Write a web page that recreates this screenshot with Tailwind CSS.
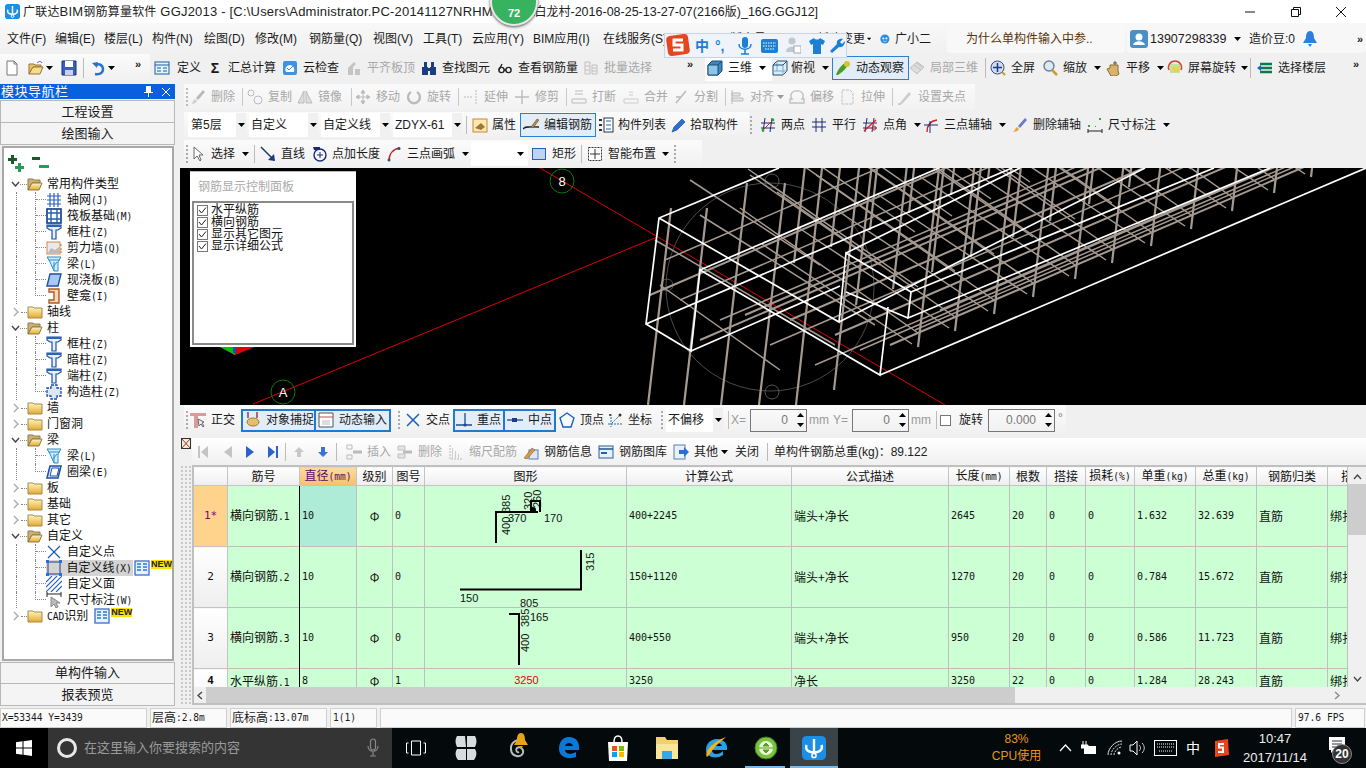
<!DOCTYPE html>
<html lang="zh">
<head>
<meta charset="utf-8">
<script src="https://cdn.jsdelivr.net/npm/@tailwindcss/browser@4"></script>
</head>
<body class="m-0 overflow-hidden">
<svg class="absolute w-0 h-0">
<defs>
<linearGradient id="gold" x1="0" y1="0" x2="0" y2="1"><stop offset="0" stop-color="#fff6c4"/><stop offset="1" stop-color="#e3a92d"/></linearGradient>
</defs>
<symbol id="c" viewBox="0 0 7 4"><path d="M0 0h7L3.5 4z"/></symbol>
<symbol id="logo" viewBox="0 0 16 16"><rect width="16" height="16" rx="3" fill="#1b8fe6"/><path d="M8 2v10M3 6c-1 3 1 5 5 5s6-2 5-5" stroke="#fff" stroke-width="1.6" fill="none"/><circle cx="8" cy="13" r="1.4" fill="none" stroke="#fff"/></symbol>
<symbol id="new" viewBox="0 0 16 16"><path d="M3 1h7l3 3v11H3z" fill="#fff" stroke="#777"/><path d="M10 1v3h3" fill="none" stroke="#777"/></symbol>
<symbol id="open" viewBox="0 0 16 16"><path d="M1 4h5l1 1h6v2H5l-4 7z" fill="#e8c56a" stroke="#93753a"/><path d="M5 7h10l-3 7H1z" fill="#f6dd8e" stroke="#93753a"/><path d="M9 3c2-2 4-2 5 0" stroke="#2a62c9" fill="none"/></symbol>
<symbol id="save" viewBox="0 0 16 16"><path d="M1 1h14v14H1z" fill="#3b5fc0" stroke="#1d2f7a"/><path d="M4 1h8v6H4z" fill="#fff"/><path d="M4 10h8v5H4z" fill="#c8d2ee"/></symbol>
<symbol id="undo" viewBox="0 0 16 16"><path d="M5 14c6 1 8-2 8-5S10 3 6 5" stroke="#2a6fd6" stroke-width="2.5" fill="none"/><path d="M2 3l6-1-1 6z" fill="#2a6fd6"/></symbol>
<symbol id="def" viewBox="0 0 16 16"><rect x="1" y="2" width="14" height="12" fill="#e4f3ff" stroke="#1b5f9e"/><path d="M1 5h14M3 8h4M3 11h4M9 8h4M9 11h4" stroke="#1b5f9e"/></symbol>
<symbol id="cloud" viewBox="0 0 16 16"><rect x="1" y="1" width="14" height="14" rx="2" fill="#3c93df"/><path d="M4 12c-2-4 1-7 4-7s5 3 4 7z" fill="#fff"/><path d="M5 8l2 2 4-4" stroke="#3c93df" fill="none"/></symbol>
<symbol id="flat" viewBox="0 0 16 16"><path d="M2 15V8l6-6 2 2-3 3v8zM9 9h5v6H9z" fill="#c4c4c4"/></symbol>
<symbol id="bino" viewBox="0 0 16 16"><path d="M1 7h6v8H1zM9 7h6v8H9zM3 2h3v5H3zM10 2h3v5h-3zM7 8h2v3H7z" fill="#1b3f7a"/></symbol>
<symbol id="glass" viewBox="0 0 16 16"><g stroke="#222" fill="none" stroke-width="1.4"><circle cx="4.5" cy="10" r="2.6"/><circle cx="11.5" cy="10" r="2.6"/><path d="M7 10h2M2 10l3-6"/></g></symbol>
<symbol id="batch" viewBox="0 0 16 16"><path d="M2 2h5v12H2zM9 5h5v9H9zM2 6h5M2 10h5M9 8h5M9 11h5" stroke="#c0c0c0" fill="#eee"/></symbol>
<symbol id="cube" viewBox="0 0 16 16"><path d="M1 5l4-4h10v10l-4 4H1z" fill="#3f86bd" stroke="#1d4f79"/><path d="M1 5h10v10H1z" fill="#8cc4ea" stroke="#1d4f79"/><path d="M11 5l4-4" stroke="#1d4f79"/></symbol>
<symbol id="wcube" viewBox="0 0 16 16"><path d="M1 5l4-4h10v10l-4 4H1z" fill="#dceefa" stroke="#1d4f79"/><path d="M5 1v10H1M5 11h10M11 5v10" fill="none" stroke="#7aa7c9"/><path d="M1 5h10l4-4" fill="none" stroke="#1d4f79"/></symbol>
<symbol id="orbit" viewBox="0 0 16 16"><path d="M1 15C3 9 7 4 12 2l2 2c-3 4-6 8-11 11z" fill="#4f9a26"/><circle cx="12" cy="4" r="3" fill="#d6c52a"/></symbol>
<symbol id="gcube" viewBox="0 0 16 16"><path d="M1 8l7-6 7 5-7 7z" fill="#ddd" stroke="#c0c0c0"/><path d="M5 5l7 5M8 3l5 4" stroke="#c0c0c0"/></symbol>
<symbol id="full" viewBox="0 0 16 16"><circle cx="7.5" cy="7.5" r="6.5" fill="#cfdcf3" stroke="#3a4f7a"/><path d="M7.5 3v9M3 7.5h9" stroke="#1c3a8a" stroke-width="1.5"/><path d="M12 12l3 3" stroke="#c5a02a" stroke-width="2"/></symbol>
<symbol id="zoom" viewBox="0 0 16 16"><circle cx="7" cy="6" r="5" fill="#dde8f7" stroke="#6a7f9a" stroke-width="1.4"/><path d="M10 10l5 5" stroke="#c5a02a" stroke-width="2.5"/></symbol>
<symbol id="hand" viewBox="0 0 16 16"><path d="M2 9l3-1V5h8v6l1 3-3 2H6z" fill="#d9b36c" stroke="#8a6a2a"/><path d="M10 1v4M8 3h4" stroke="#556"/></symbol>
<symbol id="rot" viewBox="0 0 16 16"><rect x="3" y="4" width="10" height="9" fill="#bfe39a"/><path d="M6 7h6v5H6z" fill="#f0d04a"/><path d="M2 10A6.5 6.5 0 1 1 14 10" stroke="#d0463a" stroke-width="1.6" fill="none"/></symbol>
<symbol id="layers" viewBox="0 0 16 16"><path d="M3 4h12M3 8h12M3 12h12" stroke="#0a7a50" stroke-width="2.4"/><path d="M0 8l4-3v6z" fill="#1f5fc9"/></symbol>
<symbol id="attr" viewBox="0 0 16 16"><rect x="1" y="2" width="14" height="13" fill="#fbe9b0" stroke="#d9822b"/><path d="M3 11l6-5 4 4-4 3z" fill="#9a7a3a"/></symbol>
<symbol id="edit" viewBox="0 0 16 16"><path d="M0 12c3-3 6-2 16-2" stroke="#222" fill="none" stroke-width="1.4"/><path d="M8 10l6-8 2 1-6 8z" fill="#c08a2a" stroke="#444" stroke-width=".5"/></symbol>
<symbol id="list" viewBox="0 0 16 16"><rect x="6" y="1" width="9" height="14" fill="#fff" stroke="#333"/><path d="M8 4h5M8 8h5M8 12h5" stroke="#1f5fc9"/><path d="M1 2h3v2H1zM1 7h3v2H1zM1 12h3v2H1z" fill="#333"/></symbol>
<symbol id="pick" viewBox="0 0 16 16"><path d="M1 15l2-5 8-8 3 3-8 8z" fill="#2a6fd6" stroke="#123f8a" stroke-width=".6"/></symbol>
<symbol id="two" viewBox="0 0 16 16"><path d="M5 1L3 15M12 1l-2 14M1 6h14M1 11h14" stroke="#1a2a7a" fill="none"/><path d="M2 14L14 2" stroke="#c22"/><circle cx="3" cy="13" r="1.4" fill="#2a2"/><circle cx="13" cy="3" r="1.4" fill="#2a2"/></symbol>
<symbol id="par" viewBox="0 0 16 16"><path d="M5 1v14M11 1v14M1 5h14M1 10h14" stroke="#1a2a7a" fill="none"/></symbol>
<symbol id="ang" viewBox="0 0 16 16"><path d="M5 1L3 15M12 1l-2 14M1 6h14M1 11h14" stroke="#1a2a7a" fill="none"/><path d="M2 14L14 3" stroke="#d22" stroke-width="1.4"/><circle cx="12" cy="11" r="2" fill="none" stroke="#d22"/></symbol>
<symbol id="arc" viewBox="0 0 16 16"><path d="M4 15c0-7 3-11 10-12" stroke="#c22" fill="none" stroke-width="1.4"/><path d="M1 8h14M7 4v12" stroke="#1a2a7a" fill="none"/></symbol>
<symbol id="brush" viewBox="0 0 16 16"><path d="M1 15c2-1 2-4 4-5l2 2c-1 2-3 3-6 3z" fill="#e9a33a"/><path d="M6 9l7-8 2 2-7 8z" fill="#6a7bc9"/></symbol>
<symbol id="dim" viewBox="0 0 16 16"><path d="M1 12v4M15 12v4M1 14h14" stroke="#222" fill="none"/><path d="M1 8h2v2H1zM12 1h2v2h-2zM8 9h1v1H8z" fill="#3a3"/></symbol>
<symbol id="arrow" viewBox="0 0 16 16"><path d="M4 1l0 12 3-3 3 5 1-1-2-5h4z" fill="#fff" stroke="#666"/></symbol>
<symbol id="ln" viewBox="0 0 16 16"><path d="M1 1l13 13" stroke="#1a3a7a" stroke-width="1.5"/><path d="M15 15l-7-1 6-6z" fill="#1a3a7a"/></symbol>
<symbol id="plen" viewBox="0 0 16 16"><circle cx="9" cy="9" r="6" fill="none" stroke="#1a2a7a" stroke-width="1.4"/><path d="M9 6v6M6 9h6" stroke="#1a2a7a"/><path d="M2 1h7v3H3z" fill="#1a2a7a"/></symbol>
<symbol id="arc3" viewBox="0 0 16 16"><path d="M3 15C3 8 7 3 14 2" stroke="#b22" fill="none" stroke-width="1.5"/><circle cx="3" cy="14" r="1.5" fill="#356"/><circle cx="13" cy="2.5" r="1.5" fill="#356"/></symbol>
<symbol id="rct" viewBox="0 0 16 16"><rect x="1.5" y="2.5" width="13" height="11" fill="#bcd3f2" stroke="#2a5fc0"/></symbol>
<symbol id="smart" viewBox="0 0 16 16"><rect x="1.5" y="1.5" width="13" height="13" fill="#fff" stroke="#333" stroke-dasharray="2 1"/><path d="M8 3v10M3 8h10" stroke="#333"/></symbol>
<symbol id="ortho" viewBox="0 0 16 16"><path d="M0 1h16v3H8v12H4V4H0z" fill="#d99a9a"/><path d="M8 7l1 7 2-2 2 3 1-1-2-3 2-1z" fill="#eee" stroke="#667"/></symbol>
<symbol id="snap" viewBox="0 0 16 16"><path d="M3 0v6M12 0v6" stroke="#7a2a2a" stroke-width="1.3"/><ellipse cx="8" cy="10" rx="6" ry="4" fill="#e5c06c" stroke="#9a7a2a"/></symbol>
<symbol id="dyn" viewBox="0 0 16 16"><path d="M1 1h14v14H1z" fill="#fff" stroke="#555"/><path d="M1 5h14" stroke="#b55"/><path d="M4 8h8v5H4z" fill="#ddd"/></symbol>
<symbol id="xp" viewBox="0 0 16 16"><path d="M2 2l12 12M14 2L2 14" stroke="#1a5fc0" stroke-width="1.5"/></symbol>
<symbol id="perp" viewBox="0 0 16 16"><path d="M0 13h16M9 1v12" stroke="#1a4a9a" stroke-width="1.3"/><circle cx="9" cy="13" r="1.6" fill="#1a4a9a"/></symbol>
<symbol id="mid" viewBox="0 0 16 16"><path d="M0 8h16" stroke="#1a4a9a" stroke-width="1.3"/><rect x="5" y="6" width="5" height="4" fill="#1a3a8a"/></symbol>
<symbol id="vtx" viewBox="0 0 16 16"><path d="M8 1l7 5-3 9H4L1 6z" fill="#f6fbff" stroke="#1a5fc0" stroke-width="1.4"/></symbol>
<symbol id="crd" viewBox="0 0 16 16"><path d="M4 2v13M1 12h14M5 11l8-8" stroke="#1a6fc0" stroke-dasharray="2 1" fill="none"/><circle cx="13" cy="3" r="1.5" fill="#333"/><circle cx="3" cy="3" r="1" fill="#333"/></symbol>
<symbol id="ins" viewBox="0 0 16 16"><path d="M1 1h5v4H1zM1 11h5v4H1z" fill="none" stroke="#bbb"/><path d="M7 8h9" stroke="#bbb" stroke-width="3"/></symbol>
<symbol id="del" viewBox="0 0 16 16"><path d="M1 2h7v4H1zM1 10h7v4H1z" fill="#e4e4e4" stroke="#c0c0c0"/><path d="M6 8h9" stroke="#bbb" stroke-width="3"/></symbol>
<symbol id="sc" viewBox="0 0 16 16"><path d="M2 1v14h13" stroke="#bbb" stroke-dasharray="2 1" fill="none"/><path d="M4 4h1v10H4zM7 7h1v7H7zM10 10h1v4h-1z" fill="#ccc"/></symbol>
<symbol id="inf" viewBox="0 0 16 16"><rect x="6" y="6" width="9" height="9" fill="#dbe6f6" stroke="#5a7fb0"/><path d="M1 14l8-10 3 2-8 9z" fill="#d99a3a" stroke="#555" stroke-width=".5"/></symbol>
<symbol id="lib" viewBox="0 0 16 16"><rect x="1" y="2" width="14" height="12" fill="#e7f0fb" stroke="#2a5f9a"/><path d="M1 5h14" stroke="#2a5f9a" stroke-width="1.6"/><path d="M3 8h6v2H3z" fill="#2a5f9a"/></symbol>
<symbol id="oth" viewBox="0 0 16 16"><rect x="1" y="1" width="11" height="14" fill="#e7f0fb" stroke="#5a7fb0"/><path d="M6 6h5V3l5 5-5 5v-3H6z" fill="#2a6fd6"/></symbol>
<symbol id="fo" viewBox="0 0 16 16"><path d="M1 3h5l1 1h6v3H5l-4 7z" fill="#cdb26a" stroke="#8b7a50"/><path d="M5 7h10l-3 7H1z" fill="url(#gold)" stroke="#8b7a50"/></symbol>
<symbol id="fc" viewBox="0 0 16 16"><path d="M1 3h5l1 1h8v10H1z" fill="url(#gold)" stroke="#a08a50"/></symbol>
<symbol id="tcol" viewBox="0 0 16 16"><path d="M1 1h14v3l-3 2H10v9H6V6H4L1 4z" fill="#e8f0fb" stroke="#1f4fa8" stroke-width="1.2"/><path d="M1 1h14v2H1z" fill="#2a62c0"/></symbol>
<symbol id="wg" viewBox="0 0 16 16"><path d="M4 1v14M8 1v14M12 1v14M1 4h14M1 8h14M1 12h14" stroke="#2a62c0" stroke-width="1.2"/></symbol>
<symbol id="raft" viewBox="0 0 16 16"><rect x="1" y="1" width="14" height="14" fill="#fff" stroke="#123a7a" stroke-width="1.6"/><path d="M5 1v14M11 1v14M1 5h14M1 11h14" stroke="#1f5fb0" stroke-width="1.4"/></symbol>
<symbol id="wall" viewBox="0 0 16 16"><rect x="1" y="2" width="13" height="12" fill="#e9e9e9" stroke="#d08a50"/><path d="M2 13l3-5 4 2 4-3v6z" fill="#bbb"/><path d="M14 5h2M14 9h2M14 12h2" stroke="#d2691e"/></symbol>
<symbol id="beam" viewBox="0 0 16 16"><path d="M1 1h14l-3 5v9H8L4 6z" fill="#d5ecfa" stroke="#2a8ad0"/><path d="M3 4h11M8 6v9M11 6l-4 5" stroke="#2a8ad0"/></symbol>
<symbol id="slab" viewBox="0 0 16 16"><path d="M4 2h11l-3 12H1z" fill="#a9c9f2" stroke="#1f4fa8" stroke-width="1.4"/></symbol>
<symbol id="nic" viewBox="0 0 16 16"><path d="M3 1h10v14H3v-3h5V4H3z" fill="#f6d9b8" stroke="#b05a20" stroke-width="1.4"/></symbol>
<symbol id="gz" viewBox="0 0 16 16"><path d="M5 1h6v3h4v8h-4v3H5v-3H1V4h4z" fill="#dbe6f6" stroke="#1f4fa8" stroke-width="1.3" stroke-dasharray="3 1"/></symbol>
<symbol id="ring" viewBox="0 0 16 16"><path d="M4 2h11l-3 12H1z" fill="#e6f0fb" stroke="#1f4fa8" stroke-width="1.6"/><path d="M6 4h7l-2 8H4z" fill="#fff" stroke="#1f4fa8"/></symbol>
<symbol id="xpt" viewBox="0 0 16 16"><path d="M2 2l12 12M14 2L2 14" stroke="#1f5fb0" stroke-width="1.3"/></symbol>
<symbol id="sq" viewBox="0 0 16 16"><rect x="2" y="2" width="12" height="12" fill="none" stroke="#1f3f80"/><path d="M0 0h3v3H0zM13 0h3v3h-3zM0 13h3v3H0zM13 13h3v3h-3z" fill="#2a6fd6"/></symbol>
<symbol id="hat" viewBox="0 0 16 16"><path d="M0 6l6-6M0 11L11 0M0 16L16 0M5 16L16 5M10 16l6-6" stroke="#2a62c0" stroke-width="1.1"/></symbol>
<symbol id="dcur" viewBox="0 0 16 16"><path d="M1 0v5M15 0v5M1 2h14" stroke="#222"/><path d="M5 5l0 10 3-3 2 4 2-1-2-4h4z" fill="#bbb" stroke="#888"/></symbol>
<symbol id="book" viewBox="0 0 16 16"><rect x="1" y="1" width="14" height="14" fill="#e6f2ff" stroke="#2a62c0" stroke-width="1.2"/><path d="M3 4h4M3 7h4M3 10h4M9 4h4M9 7h4M9 10h4" stroke="#2a7ad6" stroke-width="1.4"/></symbol>
</svg>

<div class="relative flex flex-col w-[1366px] h-[768px] overflow-hidden bg-[#f0f0f0] text-[12px] leading-4 text-[#1a1a1a] font-['Liberation_Sans','Noto_Sans_CJK_SC',sans-serif]">

  <!-- title bar -->
  <div class="flex items-center h-[23px] shrink-0 bg-white text-[13px] text-[#222]">
    <svg class="w-[15px] h-[15px] ml-[5px]"><use href="#logo"/></svg>
    <span class="ml-[3px] w-[482px] whitespace-nowrap tracking-[0.2px]"><span class="text-[12px]">广联达</span>BIM<span class="text-[12px]">钢筋算量软件</span> GGJ2013 - [C:\Users\Administrator.PC-20141127NRHM\De</span>
    <span class="ml-[26px] whitespace-nowrap text-[12.5px]">\<span class="text-[12px]">白龙村</span>-2016-08-25-13-27-07(2166<span class="text-[12px]">版</span>)_16G.GGJ12]</span>
    <span class="ml-auto flex items-center w-[121px] pr-[20px] justify-between">
      <svg class="w-[10px] h-[10px]" viewBox="0 0 10 10"><path d="M0 5h10" stroke="#111"/></svg>
      <svg class="w-[10px] h-[10px]" viewBox="0 0 10 10"><path d="M.5 2.5h7v7h-7zM2.5 2.5v-2h7v7h-2" fill="none" stroke="#111"/></svg>
      <svg class="w-[10px] h-[10px]" viewBox="0 0 10 10"><path d="M0 0l10 10M10 0L0 10" stroke="#111"/></svg>
    </span>
  </div>

  <!-- menu bar -->
  <div class="flex items-center h-[31px] shrink-0 pl-[7px] bg-linear-to-b from-[#f8f8f8] to-[#f0f0f0] whitespace-nowrap [&>span]:shrink-0">
    <span class="w-[48px]">文件(F)</span><span class="w-[49px]">编辑(E)</span><span class="w-[48px]">楼层(L)</span><span class="w-[52px]">构件(N)</span><span class="w-[51px]">绘图(D)</span><span class="w-[54px]">修改(M)</span><span class="w-[64px]">钢筋量(Q)</span><span class="w-[50px]">视图(V)</span><span class="w-[49px]">工具(T)</span><span class="w-[61px]">云应用(Y)</span><span class="w-[70px]">BIM应用(I)</span><span class="w-[127px]">在线服务(S)</span>
    <span class="w-[70px]">版本号</span>
    <span class="w-[65px] pl-[17px]">新建变更</span>
    <svg class="w-[7px] h-1 ml-[2px] mr-[9px]"><use href="#c"/></svg>
    <svg class="w-4 h-4" viewBox="0 0 16 16"><circle cx="8" cy="8" r="7.5" fill="#2a8fe0"/><circle cx="5.5" cy="7" r="1.6" fill="#fff"/><circle cx="10.5" cy="7" r="1.6" fill="#fff"/><path d="M5 11c2 1.5 4 1.5 6 0" stroke="#fff" fill="none"/></svg>
    <span class="w-[57px] pl-[5px]">广小二</span>
    <span class="flex items-center h-[28px] w-[178px] pl-[19px] bg-[#f8f8f8] rounded-sm text-[#5a3408]">为什么单构件输入中参..</span>
    <span class="flex items-center h-[28px] w-[239px] ml-[2px] pl-[3px] bg-[#f7f7f7] rounded-sm">
      <svg class="w-[18px] h-[18px]" viewBox="0 0 18 18"><rect width="18" height="18" rx="3" fill="#4a90c8"/><circle cx="9" cy="7" r="3.5" fill="#fff"/><path d="M3 15c1-5 11-5 12 0z" fill="#fff"/></svg>
      <span class="ml-[2px] w-[84px] text-[12.5px]">13907298339</span>
      <svg class="w-[7px] h-1"><use href="#c"/></svg>
      <span class="ml-[8px] w-[54px]">造价豆:0</span>
      <svg class="w-[14px] h-[18px]" viewBox="0 0 14 18"><path d="M7 1c3 0 4 3 4 7l3 5H0l3-5c0-4 1-7 4-7zM5 14h4l-2 3z" fill="#2a7fe0"/></svg>
      <span class="ml-auto mr-[3px] text-[11px] font-bold">»</span>
    </span>
  </div>

  <!-- toolbar 1 -->
  <div class="flex items-center h-[28px] shrink-0 whitespace-nowrap [&_svg]:size-4 [&_svg]:shrink-0 [&>span]:flex [&>span]:items-center [&>span]:gap-[5px] [&>span]:shrink-0">
    <span class="w-[150px] h-full !gap-0 pl-[4px] bg-linear-to-b from-[#fbfbfb] to-[#f0f0f0]">
      <svg><use href="#new"/></svg>
      <svg class="ml-[8px]"><use href="#open"/></svg>
      <svg class="ml-[2px] w-[7px]! h-1!"><use href="#c"/></svg>
      <svg class="ml-[8px]"><use href="#save"/></svg>
      <i class="ml-[6px] w-px h-[20px] bg-[#bbb]"></i>
      <svg class="ml-[6px]"><use href="#undo"/></svg>
      <svg class="ml-[2px] w-[7px]! h-1!"><use href="#c"/></svg>
      <b class="ml-[20px] text-[11px] -mt-2">»</b>
    </span>
    <i class="w-[4px]"></i>
    <span class="w-[53px] !gap-[7px]"><svg><use href="#def"/></svg>定义</span>
    <span class="w-[75px]"><b class="w-4 text-center text-[14px] font-bold">Σ</b>汇总计算</span>
    <span class="w-[64px]"><svg><use href="#cloud"/></svg>云检查</span>
    <span class="w-[75px] text-[#a8a8a8]"><svg><use href="#flat"/></svg>平齐板顶</span>
    <span class="w-[76px]"><svg><use href="#bino"/></svg>查找图元</span>
    <span class="w-[86px]"><svg><use href="#glass"/></svg>查看钢筋量</span>
    <span class="w-[104px] text-[#a8a8a8]"><svg><use href="#batch"/></svg>批量选择</span>
    <span class="w-[18px] -mt-2"><b class="text-[11px]">»</b></span>
    <span class="w-[67px] h-[26px] bg-white pl-[2px]"><svg><use href="#cube"/></svg>三维<svg class="ml-[2px] w-[7px]! h-1!"><use href="#c"/></svg></span>
    <span class="w-[60px] !gap-[3px]"><svg><use href="#wcube"/></svg>俯视<svg class="ml-[4px] w-[7px]! h-1!"><use href="#c"/></svg></span>
    <span class="w-[77px] h-[24px] pl-[2px] border border-[#2a7fd0] bg-[#e2edf8]"><svg><use href="#orbit"/></svg>动态观察</span>
    <span class="w-[76px] text-[#a8a8a8]"><svg><use href="#gcube"/></svg>局部三维</span>
    <i class="w-px h-[20px] bg-[#bbb] mr-[4px]"></i>
    <span class="w-[52px]"><svg><use href="#full"/></svg>全屏</span>
    <span class="w-[63px]"><svg><use href="#zoom"/></svg>缩放<svg class="ml-[2px] w-[7px]! h-1!"><use href="#c"/></svg></span>
    <span class="w-[62px]"><svg><use href="#hand"/></svg>平移<svg class="ml-[2px] w-[7px]! h-1!"><use href="#c"/></svg></span>
    <span class="w-[83px]"><svg><use href="#rot"/></svg>屏幕旋转<svg class="ml-0 w-[7px]! h-1!"><use href="#c"/></svg></span>
    <i class="w-px h-[20px] bg-[#bbb] mr-[6px]"></i>
    <span class="w-[96px]"><svg><use href="#layers"/></svg>选择楼层</span>
    <span class="-mt-2"><b class="text-[11px]">»</b></span>
  </div>

  <!-- main -->
  <div class="flex h-[626px] shrink-0">
    <!-- left nav -->
    <div class="flex flex-col w-[175px] shrink-0 pt-[2px] mr-[5px]">
      <div class="flex items-center h-[15px] bg-[#0a5ee0] text-white text-[13px] pl-[1px]">
        <span class="tracking-[0.5px]">模块导航栏</span>
        <svg class="ml-auto w-[9px] h-[11px]" viewBox="0 0 9 11"><path d="M2 0h5v6h2v1H5v4H4V7H0V6h2z" fill="#fff"/></svg>
        <svg class="ml-[9px] mr-[5px] w-[8px] h-[8px]" viewBox="0 0 8 8"><path d="M0 0l8 8M8 0L0 8" stroke="#fff"/></svg>
      </div>
      <div class="flex items-center justify-center h-[23px] mt-[1px] bg-[#f4f4f4] border border-[#b8b8b8] text-[13px]">工程设置</div>
      <div class="flex items-center justify-center h-[22px] bg-[#f4f4f4] border border-[#b8b8b8] border-t-0 text-[13px]">绘图输入</div>
      <div class="h-[515px] mt-[1px] ml-[2px] mr-px bg-white border-2 border-[#a8a8a8] pt-[1px] text-[#111] font-['DejaVu_Sans_Mono','Noto_Sans_CJK_SC',monospace] whitespace-nowrap">
        <div class="flex items-center h-[27px] pl-[3px] gap-[7px]">
          <svg class="w-[18px] h-[18px]" viewBox="0 0 18 18"><path d="M4 1h3v3h3v3H7v3H4V7H1V4h3z" fill="#1a5a2a"/><path d="M11 9h3v3h3v3h-3v3h-3v-3H8v-3h3z" fill="#2a9a5a"/></svg>
          <svg class="w-[18px] h-[18px]" viewBox="0 0 18 18"><path d="M0 3h8v3H0z" fill="#1a5a2a"/><path d="M7 11h10v3H7z" fill="#2a9a5a"/></svg>
        </div>
        <div class="[&_svg]:size-4 [&_svg]:shrink-0">
        <div class="flex h-4 items-center"><svg class="ml-[7px] w-[9px]! h-[6px]!" viewBox="0 0 9 6"><path d="M1 1l3.5 4L8 1" fill="none" stroke="#444" stroke-width="1.4"/></svg><i class="w-[7px] border-b border-dotted border-[#888]"></i><svg><use href="#fo"/></svg><span class="ml-[4px]">常用构件类型</span></div>
        <div class="flex h-4"><i class="ml-[12px] w-[19px] border-l border-dotted border-[#888]"></i><i class="w-[11px] border-l border-dotted border-[#888] after:block after:h-2 after:border-b after:border-dotted after:border-[#888]"></i><svg><use href="#wg"/></svg><span class="ml-[5px]">轴网<small>(J)</small></span></div>
        <div class="flex h-4"><i class="ml-[12px] w-[19px] border-l border-dotted border-[#888]"></i><i class="w-[11px] border-l border-dotted border-[#888] after:block after:h-2 after:border-b after:border-dotted after:border-[#888]"></i><svg><use href="#raft"/></svg><span class="ml-[5px]">筏板基础<small>(M)</small></span></div>
        <div class="flex h-4"><i class="ml-[12px] w-[19px] border-l border-dotted border-[#888]"></i><i class="w-[11px] border-l border-dotted border-[#888] after:block after:h-2 after:border-b after:border-dotted after:border-[#888]"></i><svg><use href="#tcol"/></svg><span class="ml-[5px]">框柱<small>(Z)</small></span></div>
        <div class="flex h-4"><i class="ml-[12px] w-[19px] border-l border-dotted border-[#888]"></i><i class="w-[11px] border-l border-dotted border-[#888] after:block after:h-2 after:border-b after:border-dotted after:border-[#888]"></i><svg><use href="#wall"/></svg><span class="ml-[5px]">剪力墙<small>(Q)</small></span></div>
        <div class="flex h-4"><i class="ml-[12px] w-[19px] border-l border-dotted border-[#888]"></i><i class="w-[11px] border-l border-dotted border-[#888] after:block after:h-2 after:border-b after:border-dotted after:border-[#888]"></i><svg><use href="#beam"/></svg><span class="ml-[5px]">梁<small>(L)</small></span></div>
        <div class="flex h-4"><i class="ml-[12px] w-[19px] border-l border-dotted border-[#888]"></i><i class="w-[11px] border-l border-dotted border-[#888] after:block after:h-2 after:border-b after:border-dotted after:border-[#888]"></i><svg><use href="#slab"/></svg><span class="ml-[5px]">现浇板<small>(B)</small></span></div>
        <div class="flex h-4"><i class="ml-[12px] w-[19px] border-l border-dotted border-[#888]"></i><i class="w-[11px] h-2 border-l border-b border-dotted border-[#888]"></i><svg><use href="#nic"/></svg><span class="ml-[5px]">壁龛<small>(I)</small></span></div>
        <div class="flex h-4 items-center"><svg class="ml-[9px] w-[7px]! h-[10px]!" viewBox="0 0 7 10"><path d="M1 1l4 4-4 4" fill="none" stroke="#aaa" stroke-width="1.4"/></svg><i class="ml-px w-[6px] border-b border-dotted border-[#888]"></i><svg><use href="#fc"/></svg><span class="ml-[4px]">轴线</span></div>
        <div class="flex h-4 items-center"><svg class="ml-[7px] w-[9px]! h-[6px]!" viewBox="0 0 9 6"><path d="M1 1l3.5 4L8 1" fill="none" stroke="#444" stroke-width="1.4"/></svg><i class="w-[7px] border-b border-dotted border-[#888]"></i><svg><use href="#fo"/></svg><span class="ml-[4px]">柱</span></div>
        <div class="flex h-4"><i class="ml-[12px] w-[19px] border-l border-dotted border-[#888]"></i><i class="w-[11px] border-l border-dotted border-[#888] after:block after:h-2 after:border-b after:border-dotted after:border-[#888]"></i><svg><use href="#tcol"/></svg><span class="ml-[5px]">框柱<small>(Z)</small></span></div>
        <div class="flex h-4"><i class="ml-[12px] w-[19px] border-l border-dotted border-[#888]"></i><i class="w-[11px] border-l border-dotted border-[#888] after:block after:h-2 after:border-b after:border-dotted after:border-[#888]"></i><svg><use href="#tcol"/></svg><span class="ml-[5px]">暗柱<small>(Z)</small></span></div>
        <div class="flex h-4"><i class="ml-[12px] w-[19px] border-l border-dotted border-[#888]"></i><i class="w-[11px] border-l border-dotted border-[#888] after:block after:h-2 after:border-b after:border-dotted after:border-[#888]"></i><svg><use href="#tcol"/></svg><span class="ml-[5px]">端柱<small>(Z)</small></span></div>
        <div class="flex h-4"><i class="ml-[12px] w-[19px] border-l border-dotted border-[#888]"></i><i class="w-[11px] h-2 border-l border-b border-dotted border-[#888]"></i><svg><use href="#gz"/></svg><span class="ml-[5px]">构造柱<small>(Z)</small></span></div>
        <div class="flex h-4 items-center"><svg class="ml-[9px] w-[7px]! h-[10px]!" viewBox="0 0 7 10"><path d="M1 1l4 4-4 4" fill="none" stroke="#aaa" stroke-width="1.4"/></svg><i class="ml-px w-[6px] border-b border-dotted border-[#888]"></i><svg><use href="#fc"/></svg><span class="ml-[4px]">墙</span></div>
        <div class="flex h-4 items-center"><svg class="ml-[9px] w-[7px]! h-[10px]!" viewBox="0 0 7 10"><path d="M1 1l4 4-4 4" fill="none" stroke="#aaa" stroke-width="1.4"/></svg><i class="ml-px w-[6px] border-b border-dotted border-[#888]"></i><svg><use href="#fc"/></svg><span class="ml-[4px]">门窗洞</span></div>
        <div class="flex h-4 items-center"><svg class="ml-[7px] w-[9px]! h-[6px]!" viewBox="0 0 9 6"><path d="M1 1l3.5 4L8 1" fill="none" stroke="#444" stroke-width="1.4"/></svg><i class="w-[7px] border-b border-dotted border-[#888]"></i><svg><use href="#fo"/></svg><span class="ml-[4px]">梁</span></div>
        <div class="flex h-4"><i class="ml-[12px] w-[19px] border-l border-dotted border-[#888]"></i><i class="w-[11px] border-l border-dotted border-[#888] after:block after:h-2 after:border-b after:border-dotted after:border-[#888]"></i><svg><use href="#beam"/></svg><span class="ml-[5px]">梁<small>(L)</small></span></div>
        <div class="flex h-4"><i class="ml-[12px] w-[19px] border-l border-dotted border-[#888]"></i><i class="w-[11px] h-2 border-l border-b border-dotted border-[#888]"></i><svg><use href="#ring"/></svg><span class="ml-[5px]">圈梁<small>(E)</small></span></div>
        <div class="flex h-4 items-center"><svg class="ml-[9px] w-[7px]! h-[10px]!" viewBox="0 0 7 10"><path d="M1 1l4 4-4 4" fill="none" stroke="#aaa" stroke-width="1.4"/></svg><i class="ml-px w-[6px] border-b border-dotted border-[#888]"></i><svg><use href="#fc"/></svg><span class="ml-[4px]">板</span></div>
        <div class="flex h-4 items-center"><svg class="ml-[9px] w-[7px]! h-[10px]!" viewBox="0 0 7 10"><path d="M1 1l4 4-4 4" fill="none" stroke="#aaa" stroke-width="1.4"/></svg><i class="ml-px w-[6px] border-b border-dotted border-[#888]"></i><svg><use href="#fc"/></svg><span class="ml-[4px]">基础</span></div>
        <div class="flex h-4 items-center"><svg class="ml-[9px] w-[7px]! h-[10px]!" viewBox="0 0 7 10"><path d="M1 1l4 4-4 4" fill="none" stroke="#aaa" stroke-width="1.4"/></svg><i class="ml-px w-[6px] border-b border-dotted border-[#888]"></i><svg><use href="#fc"/></svg><span class="ml-[4px]">其它</span></div>
        <div class="flex h-4 items-center"><svg class="ml-[7px] w-[9px]! h-[6px]!" viewBox="0 0 9 6"><path d="M1 1l3.5 4L8 1" fill="none" stroke="#444" stroke-width="1.4"/></svg><i class="w-[7px] border-b border-dotted border-[#888]"></i><svg><use href="#fo"/></svg><span class="ml-[4px]">自定义</span></div>
        <div class="flex h-4"><i class="ml-[12px] w-[19px] border-l border-dotted border-[#888]"></i><i class="w-[11px] border-l border-dotted border-[#888] after:block after:h-2 after:border-b after:border-dotted after:border-[#888]"></i><svg><use href="#xpt"/></svg><span class="ml-[5px]">自定义点</span></div>
        <div class="flex h-4"><i class="ml-[12px] w-[19px] border-l border-dotted border-[#888]"></i><i class="w-[11px] border-l border-dotted border-[#888] after:block after:h-2 after:border-b after:border-dotted after:border-[#888]"></i><span class="flex items-center bg-[#d4d4d4] w-[89px]"><svg><use href="#sq"/></svg><span class="ml-[5px]">自定义线<small>(X)</small></span></span><svg class="ml-[1px]"><use href="#book"/></svg><b class="self-start bg-[#ffe100] text-[#222] text-[9px] leading-[9px] font-bold font-['Liberation_Sans'] ml-[1px]">NEW</b></div>
        <div class="flex h-4"><i class="ml-[12px] w-[19px] border-l border-dotted border-[#888]"></i><i class="w-[11px] border-l border-dotted border-[#888] after:block after:h-2 after:border-b after:border-dotted after:border-[#888]"></i><svg><use href="#hat"/></svg><span class="ml-[5px]">自定义面</span></div>
        <div class="flex h-4"><i class="ml-[12px] w-[19px] border-l border-dotted border-[#888]"></i><i class="w-[11px] h-2 border-l border-b border-dotted border-[#888]"></i><svg><use href="#dcur"/></svg><span class="ml-[5px]">尺寸标注<small>(W)</small></span></div>
        <div class="flex h-4 items-center"><svg class="ml-[9px] w-[7px]! h-[10px]!" viewBox="0 0 7 10"><path d="M1 1l4 4-4 4" fill="none" stroke="#aaa" stroke-width="1.4"/></svg><i class="ml-px w-[6px] border-b border-dotted border-[#888]"></i><svg><use href="#fc"/></svg><span class="ml-[4px]"><small>CAD</small>识别</span><svg class="ml-[6px]"><use href="#book"/></svg><b class="self-start bg-[#ffe100] text-[#222] text-[9px] leading-[9px] font-bold font-['Liberation_Sans'] ml-[1px]">NEW</b></div>
        </div>
      </div>
      <div class="flex items-center justify-center h-[22px] mt-px bg-[#f4f4f4] border border-[#b8b8b8] text-[13px]">单构件输入</div>
      <div class="flex items-center justify-center h-[22px] bg-[#f4f4f4] border border-[#b8b8b8] border-t-0 text-[13px]">报表预览</div>
    </div>

    <!-- right pane -->
    <div class="flex flex-col w-[1186px] whitespace-nowrap [&_svg]:size-4 [&_svg]:shrink-0">
      <!-- row 2 -->
      <div class="flex items-center h-[26px] mt-[2px] ml-[4px] w-[791px] shrink-0 text-[#a8a8a8] bg-linear-to-b from-[#fafafa] to-[#f2f2f2] [&>span]:flex [&>span]:items-center [&>span]:gap-[5px] [&>span]:shrink-0">
        <i class="w-0 h-[18px] ml-[2px] mr-[2px] border-l-2 border-dotted border-[#bbb]"></i>
        <span class="w-[52px]"><svg><use href="#brush" class="grayscale opacity-50"/></svg>删除</span><i class="w-px h-[18px] bg-[#c8c8c8] mr-[4px]"></i>
        <span class="w-[50px]"><svg viewBox="0 0 16 16"><g fill="none" stroke="#bbb"><circle cx="4" cy="4" r="3"/><circle cx="11" cy="11" r="4"/></g></svg>复制</span>
        <span class="w-[54px]"><svg viewBox="0 0 16 16"><path d="M7 2L1 14h6zM9 2l6 12H9z" fill="#ddd" stroke="#bbb"/></svg>镜像</span><i class="w-px h-[18px] bg-[#c8c8c8] mr-[3px]"></i>
        <span class="w-[51px]"><svg viewBox="0 0 16 16"><path d="M8 1v14M1 8h14M8 1L6 4h4zM8 15l-2-3h4zM1 8l3-2v4zM15 8l-3-2v4z" fill="#bbb" stroke="#bbb"/></svg>移动</span>
        <span class="w-[52px]"><svg viewBox="0 0 16 16"><path d="M5 3a6 6 0 1 0 6 0" fill="none" stroke="#bbb" stroke-width="2.4"/></svg>旋转</span><i class="w-px h-[18px] bg-[#c8c8c8] mr-[4px]"></i>
        <span class="w-[51px]"><svg viewBox="0 0 16 16"><path d="M1 8h9M13 1v14" stroke="#bbb" stroke-dasharray="2 1"/></svg>延伸</span>
        <span class="w-[52px]"><svg viewBox="0 0 16 16"><path d="M1 8h14M8 1v14" stroke="#bbb" stroke-width="1.4"/></svg>修剪</span><i class="w-px h-[18px] bg-[#c8c8c8] mr-[4px]"></i>
        <span class="w-[52px]"><svg viewBox="0 0 16 16"><path d="M1 10h14v4H1zM4 2h8M4 5h8" stroke="#bbb" fill="none"/></svg>打断</span>
        <span class="w-[50px]"><svg viewBox="0 0 16 16"><path d="M1 10h14v4H1zM6 3h4M6 6h4" stroke="#ccc" fill="none"/></svg>合并</span>
        <span class="w-[52px]"><svg viewBox="0 0 16 16"><path d="M3 14L13 2M3 8h5" stroke="#bbb" stroke-width="1.6"/></svg>分割</span><i class="w-px h-[18px] bg-[#c8c8c8] mr-[3px]"></i>
        <span class="w-[60px]"><svg viewBox="0 0 16 16"><path d="M3 1v14M3 4h8v3H3zM3 9h11v3H3z" fill="#e4e4e4" stroke="#bbb"/></svg>对齐<svg class="w-[7px]! h-1! -ml-[2px] fill-[#999]"><use href="#c"/></svg></span>
        <span class="w-[51px]"><svg viewBox="0 0 16 16"><path d="M8 2a5 5 0 0 1 5 8h2v4H1v-4h2a5 5 0 0 1 5-8z" fill="none" stroke="#c0c0c0" stroke-width="1.4"/></svg>偏移</span>
        <span class="w-[52px]"><svg viewBox="0 0 16 16"><path d="M2 1h8l3 3v11H2z" fill="#f4f4f4" stroke="#c0c0c0" stroke-dasharray="3 1"/></svg>拉伸</span><i class="w-px h-[18px] bg-[#c8c8c8] mr-[4px]"></i>
        <span><svg viewBox="0 0 16 16"><path d="M3 14L12 3l2 2-9 10zM1 14h3v2H1z" fill="#ccc"/></svg>设置夹点</span>
      </div>

      <!-- row 3 -->
      <div class="flex items-center h-[26px] mt-[2px] ml-[4px] shrink-0 [&>span]:flex [&>span]:items-center [&>span]:gap-[5px] [&>span]:shrink-0">
        <span class="w-[565px] h-full !gap-0 pl-[4px] bg-linear-to-b from-[#fbfbfb] to-[#f0f0f0]">
          <span class="flex items-center h-[24px] w-[58px] pl-[3px] bg-white">第5层<span class="ml-auto flex h-full w-[10px] items-center justify-center bg-[#f0f0f0]"><svg class="w-[7px]! h-1!"><use href="#c"/></svg></span></span>
          <span class="flex items-center h-[24px] w-[69px] ml-[3px] pl-[2px] bg-white">自定义<span class="ml-auto flex h-full w-[10px] items-center justify-center bg-[#f0f0f0]"><svg class="w-[7px]! h-1!"><use href="#c"/></svg></span></span>
          <span class="flex items-center h-[24px] w-[69px] ml-[3px] pl-[2px] bg-white">自定义线<span class="ml-auto flex h-full w-[10px] items-center justify-center bg-[#f0f0f0]"><svg class="w-[7px]! h-1!"><use href="#c"/></svg></span></span>
          <span class="flex items-center h-[24px] w-[69px] ml-[3px] pl-[2px] bg-white">ZDYX-61<span class="ml-auto flex h-full w-[10px] items-center justify-center bg-[#f0f0f0]"><svg class="w-[7px]! h-1!"><use href="#c"/></svg></span></span>
          <i class="ml-[4px] mr-[5px] w-px h-[18px] bg-[#bbb]"></i>
          <span class="flex items-center gap-[4px] w-[48px]"><svg><use href="#attr"/></svg>属性</span>
          <span class="flex items-center gap-[5px] w-[76px] h-[24px] pl-[2px] border border-[#2a7fd0] bg-[#e2edf8]"><svg><use href="#edit"/></svg>编辑钢筋</span>
          <span class="flex items-center gap-[4px] w-[75px] pl-[2px]"><svg><use href="#list"/></svg>构件列表</span>
          <span class="flex items-center gap-[3px]"><svg><use href="#pick"/></svg>拾取构件</span>
        </span>
        <i class="w-0 h-[18px] ml-[1px] mr-[8px] border-l-2 border-dotted border-[#aaa]"></i>
        <span class="w-[51px]"><svg><use href="#two"/></svg>两点</span>
        <span class="w-[51px]"><svg><use href="#par"/></svg>平行</span>
        <span class="w-[61px]"><svg><use href="#ang"/></svg>点角<svg class="ml-[2px] w-[7px]! h-1!"><use href="#c"/></svg></span>
        <span class="w-[89px]"><svg><use href="#arc"/></svg>三点辅轴<svg class="ml-[2px] w-[7px]! h-1!"><use href="#c"/></svg></span>
        <span class="w-[75px]"><svg><use href="#brush"/></svg>删除辅轴</span>
        <span><svg><use href="#dim"/></svg>尺寸标注<svg class="ml-[2px] w-[7px]! h-1!"><use href="#c"/></svg></span>
      </div>

      <!-- row 4 -->
      <div class="flex items-center h-[27px] mt-[2px] ml-[4px] w-[518px] shrink-0 bg-linear-to-b from-[#fbfbfb] to-[#f0f0f0] [&>span]:flex [&>span]:items-center [&>span]:gap-[5px] [&>span]:shrink-0">
        <i class="w-0 h-[18px] ml-[2px] mr-[2px] border-l-2 border-dotted border-[#aaa]"></i>
        <span class="w-[64px]"><svg><use href="#arrow"/></svg>选择<svg class="ml-[2px] w-[7px]! h-1!"><use href="#c"/></svg></span>
        <i class="w-px h-[18px] bg-[#bbb] mr-[5px]"></i>
        <span class="w-[51px]"><svg><use href="#ln"/></svg>直线</span>
        <span class="w-[75px]"><svg><use href="#plen"/></svg>点加长度</span>
        <span class="w-[85px]"><svg><use href="#arc3"/></svg>三点画弧<svg class="ml-[2px] w-[7px]! h-1!"><use href="#c"/></svg></span>
        <span class="w-[57px] h-[24px] mr-[3px] !gap-0 bg-white"><svg class="ml-auto mr-[4px] w-[7px]! h-1!"><use href="#c"/></svg></span>
        <span class="w-[50px]"><svg><use href="#rct"/></svg>矩形</span>
        <i class="w-px h-[18px] bg-[#bbb] mr-[5px]"></i>
        <span class="w-[87px]"><svg><use href="#smart"/></svg>智能布置<svg class="ml-[1px] w-[7px]! h-1!"><use href="#c"/></svg></span>
        <i class="w-0 h-[18px] border-l-2 border-dotted border-[#aaa]"></i>
      </div>

      <!-- canvas -->
      <div class="relative h-[237px] mt-px shrink-0 bg-black overflow-hidden">
        <svg class="absolute left-0 top-0 w-[1186px]! h-[237px]!" viewBox="180 168 1186 237">
          <defs>
            <g id="st" fill="none" stroke="#a59a92" stroke-width="2.2">
              <path d="M0 0l23-195M-62 -42l22-195M-124 -84l22-195"/>
              <path stroke-width="1.5" d="M0 -14l-178-125M0 -60l-170-118M-3 -115l-150-105M-6 -3l-150-100"/>
            </g>
          </defs>
          <line x1="540" y1="168" x2="945" y2="405" stroke="#e00000"/>
          <line x1="253" y1="404" x2="657" y2="237" stroke="#e00000"/>
          <circle cx="562" cy="181" r="12" fill="none" stroke="#0a7a0a"/>
          <circle cx="283" cy="392" r="12" fill="none" stroke="#0a7a0a"/>
          <text x="562" y="186" text-anchor="middle" fill="#fff" font-size="13">8</text>
          <text x="283" y="397" text-anchor="middle" fill="#fff" font-size="13">A</text>
          <path d="M220 347l15 8 20-8z" fill="#e00000"/><path d="M220 347l15 8v-8z" fill="#00c000"/><rect x="233" y="347" width="3" height="6" fill="#0050d0"/>
          <circle cx="770" cy="287" r="104" fill="none" stroke="#4a4a4a"/>
          <circle cx="772" cy="181" r="7" fill="none" stroke="#555"/><circle cx="772" cy="392" r="7" fill="none" stroke="#555"/><circle cx="667" cy="285" r="6" fill="none" stroke="#555"/>
          <g fill="none" stroke="#a59a92" stroke-width="2.2">
            <path d="M648 405l23-197M684 405l23-197M721 405l26-222M759 405l26-222M796 405l26-237M834 390l25-222"/>
            <path stroke-width="1.5" d="M655 240l180 105M700 215l175 110M660 285l120 85M750 175l130 90M690 180l130 85"/>
            <path stroke-width="2" d="M650 295l500-215M700 340l500-215M745 315l500-215M790 320l500-215M835 335l500-215M890 345l500-215"/>
            <path stroke-width="1.5" d="M665 260l500-215M680 300l500-215M720 320l500-215M770 345l500-215M815 365l500-215M860 350l500-215M915 330l500-215M940 310l500-215"/>
          </g>
          <use href="#st" x="918" y="347"/><use href="#st" x="955" y="331"/><use href="#st" x="994" y="314"/><use href="#st" x="1033" y="297"/><use href="#st" x="1075" y="279"/><use href="#st" x="1112" y="263"/><use href="#st" x="1151" y="246"/><use href="#st" x="1191" y="229"/><use href="#st" x="1232" y="211"/><use href="#st" x="1274" y="193"/><use href="#st" x="1311" y="177"/><use href="#st" x="1350" y="160"/>
          <g fill="none" stroke="#fff" stroke-width="1.7">
            <path d="M779 168L659 218L646 324L691 351L700 270L880 375L888 307M880 375L1366 168"/>
            <path d="M659 218L839 322L846 253L911 292L908 318L1270 168M911 292L1214 168M839 322L1145 168M846 253L1020 168"/>
            <path d="M646 324L1012 168M700 270L939 168M691 351L840 286M908 318L846 292"/>
          </g>
        </svg>
        <div class="absolute left-[10px] top-[3px] w-[166px] h-[176px] flex flex-col bg-white p-[2px] pt-0 border-t border-[#bbb] text-[#111]">
          <div class="h-[29px] shrink-0 pl-[6px] flex items-center text-[#aaa]">钢筋显示控制面板</div>
          <div class="flex-1 border-2 border-[#8a8a8a] pt-[1px] pl-[3px] [&>div]:flex [&>div]:items-center [&>div]:h-3 [&>div]:gap-[3px]">
            <div><svg class="size-[11px]!" viewBox="0 0 11 11"><rect x=".5" y=".5" width="10" height="10" fill="#fff" stroke="#777"/><path d="M2 5l2.5 3L9 2.5" fill="none" stroke="#222"/></svg>水平纵筋</div>
            <div><svg class="size-[11px]!" viewBox="0 0 11 11"><rect x=".5" y=".5" width="10" height="10" fill="#fff" stroke="#777"/><path d="M2 5l2.5 3L9 2.5" fill="none" stroke="#222"/></svg>横向钢筋</div>
            <div><svg class="size-[11px]!" viewBox="0 0 11 11"><rect x=".5" y=".5" width="10" height="10" fill="#fff" stroke="#777"/><path d="M2 5l2.5 3L9 2.5" fill="none" stroke="#222"/></svg>显示其它图元</div>
            <div><svg class="size-[11px]!" viewBox="0 0 11 11"><rect x=".5" y=".5" width="10" height="10" fill="#fff" stroke="#777"/><path d="M2 5l2.5 3L9 2.5" fill="none" stroke="#222"/></svg>显示详细公式</div>
          </div>
        </div>
      </div>

      <!-- snap toolbar -->
      <div class="flex items-center h-[30px] ml-[4px] w-[882px] shrink-0 bg-linear-to-b from-[#fbfbfb] to-[#f0f0f0] [&>span]:flex [&>span]:items-center [&>span]:gap-[5px] [&>span]:shrink-0">
        <i class="w-0 h-[18px] ml-[2px] border-l-2 border-dotted border-[#aaa]"></i>
        <span class="w-[51px] ml-[2px]"><svg><use href="#ortho"/></svg>正交</span>
        <span class="w-[75px] h-[23px] pl-[2px] border-2 border-[#1f7ad0] bg-[#e2edf8]"><svg><use href="#snap"/></svg>对象捕捉</span>
        <span class="w-[75px] h-[23px] pl-[2px] border-2 border-l-0 border-[#1f7ad0] bg-[#e2edf8]"><svg><use href="#dyn"/></svg>动态输入</span>
        <i class="w-0 h-[18px] ml-[7px] mr-[5px] border-l-2 border-dotted border-[#aaa]"></i>
        <span class="w-[48px]"><svg><use href="#xp"/></svg>交点</span>
        <span class="w-[52px] h-[23px] pl-[1px] border-2 border-[#1f7ad0] bg-[#e2edf8]"><svg><use href="#perp"/></svg>重点</span>
        <span class="w-[51px] h-[23px] pl-[2px] border-2 border-l-0 border-[#1f7ad0] bg-[#e2edf8]"><svg><use href="#mid"/></svg>中点</span>
        <span class="w-[51px] pl-[3px]"><svg><use href="#vtx"/></svg>顶点</span>
        <span class="w-[52px]"><svg><use href="#crd"/></svg>坐标</span>
        <i class="w-0 h-[18px] ml-[2px] mr-[3px] border-l-2 border-dotted border-[#aaa]"></i>
        <span class="w-[57px] h-[24px] pl-[2px] !gap-0 bg-white">不偏移<span class="ml-auto flex h-full w-[10px] items-center justify-center bg-[#f0f0f0]"><svg class="w-[7px]! h-1!"><use href="#c"/></svg></span></span>
        <i class="ml-[5px] w-px h-[18px] bg-[#bbb]"></i>
        <span class="w-[21px] pl-[2px] text-[#999]">X=</span>
        <span class="w-[57px] h-[23px] !gap-0 border border-[#777] text-[#777] justify-end"><span class="mr-[6px]">0</span><span class="flex flex-col w-[12px] h-full items-center justify-around"><svg class="w-[7px]! h-1! rotate-180"><use href="#c"/></svg><svg class="w-[7px]! h-1!"><use href="#c"/></svg></span></span>
        <span class="w-[26px] pl-[2px] text-[#999]">mm</span>
        <span class="w-[19px] text-[#999]">Y=</span>
        <span class="w-[57px] h-[23px] !gap-0 border border-[#777] text-[#777] justify-end"><span class="mr-[6px]">0</span><span class="flex flex-col w-[12px] h-full items-center justify-around"><svg class="w-[7px]! h-1! rotate-180"><use href="#c"/></svg><svg class="w-[7px]! h-1!"><use href="#c"/></svg></span></span>
        <span class="w-[27px] pl-[2px] text-[#999]">mm</span>
        <i class="w-px h-[18px] bg-[#bbb] mr-[3px]"></i>
        <i class="w-[11px] h-[11px] border border-[#777] bg-white mr-[8px]"></i>
        <span class="w-[29px]">旋转</span>
        <span class="w-[67px] h-[23px] !gap-0 border border-[#777] text-[#777] justify-end"><span class="mr-[6px]">0.000</span><span class="flex flex-col w-[12px] h-full items-center justify-around"><svg class="w-[7px]! h-1! rotate-180"><use href="#c"/></svg><svg class="w-[7px]! h-1!"><use href="#c"/></svg></span></span>
        <span class="ml-[3px] text-[#777] -mt-1">°</span>
      </div>

      <!-- grid toolbar -->
      <div class="flex items-center h-[27px] mt-[3px] shrink-0 text-[#222]">
        <svg class="w-[10px]! h-[11px]! self-start ml-[1px] mr-[1px]" viewBox="0 0 10 11"><rect x=".5" y=".5" width="9" height="10" fill="#eed" stroke="#333"/><path d="M1 1l8 9M9 1l-8 9" stroke="#a33"/></svg>
        <div class="flex items-center flex-1 h-full bg-linear-to-b from-[#ffffff] to-[#f0f0f0] pl-[3px] [&>span]:flex [&>span]:items-center [&>span]:gap-[5px] [&>span]:shrink-0">
          <span class="w-[25px] pl-[3px]"><svg class="w-[10px]! h-[12px]!" viewBox="0 0 10 12"><path d="M0 0h2v12H0zM10 0v12L3 6z" fill="#c4c4c4"/></svg></span>
          <span class="w-[23px] pl-[4px]"><svg class="w-[8px]! h-[12px]!" viewBox="0 0 8 12"><path d="M8 0v12L0 6z" fill="#c4c4c4"/></svg></span>
          <span class="w-[24px] pl-[3px]"><svg class="w-[8px]! h-[12px]!" viewBox="0 0 8 12"><path d="M0 0v12l8-6z" fill="#2a62c9"/></svg></span>
          <span class="w-[18px] pl-[1px]"><svg class="w-[10px]! h-[12px]!" viewBox="0 0 10 12"><path d="M8 0h2v12H8zM0 0v12l7-6z" fill="#2a62c9"/></svg></span>
          <i class="w-px h-[18px] bg-[#bbb] mr-[8px]"></i>
          <span class="w-[24px]"><svg class="w-[10px]! h-[10px]!" viewBox="0 0 10 10"><path d="M5 0l5 5H7v5H3V5H0z" fill="#c8c8c8"/></svg></span>
          <span class="w-[18px]"><svg class="w-[10px]! h-[10px]!" viewBox="0 0 10 10"><path d="M5 10L0 5h3V0h4v5h3z" fill="#3a72d9"/></svg></span>
          <i class="w-px h-[18px] bg-[#bbb] mr-[9px]"></i>
          <span class="w-[51px] text-[#a8a8a8]"><svg><use href="#ins"/></svg>插入</span>
          <span class="w-[51px] text-[#a8a8a8]"><svg><use href="#del"/></svg>删除</span>
          <span class="w-[75px] text-[#a8a8a8]"><svg><use href="#sc"/></svg>缩尺配筋</span>
          <span class="w-[75px]"><svg><use href="#inf"/></svg>钢筋信息</span>
          <span class="w-[75px]"><svg><use href="#lib"/></svg>钢筋图库</span>
          <span class="w-[62px]"><svg><use href="#oth"/></svg>其他<svg class="-ml-[2px] w-[7px]! h-1!"><use href="#c"/></svg></span>
          <span class="w-[32px]">关闭</span>
          <i class="w-px h-[18px] bg-[#bbb] mr-[6px]"></i>
          <span>单构件钢筋总重(kg)：89.122</span>
        </div>
      </div>

      <!-- grid -->
      <div class="flex h-[240px] shrink-0">
        <div class="w-[12px] shrink-0 bg-[radial-gradient(#c8c8c8_1px,transparent_1px)] bg-size-[4px_4px]"></div>
        <div class="flex flex-col flex-1 border-y-2 border-l-2 border-[#c0c0c0] bg-white">
          <div class="flex h-[220px]">
            <div class="relative w-[1154px] overflow-hidden shrink-0">
              <table class="table-fixed border-collapse w-[1154px] -mt-px -ml-px text-[#111] [&_td]:border [&_td]:border-[#bfbfbf] [&_td]:pl-[2px] [&_td]:overflow-hidden [&_th]:border [&_th]:border-[#c4c4c4] [&_th]:font-normal [&_th]:overflow-hidden [&_th]:bg-linear-to-b [&_th]:from-white [&_th]:to-[#eeeeee] font-['Noto_Sans_CJK_SC','DejaVu_Sans_Mono',monospace]">
                <colgroup><col class="w-[34px]"><col class="w-[72px]"><col class="w-[57px]"><col class="w-[36px]"><col class="w-[32px]"><col class="w-[202px]"><col class="w-[165px]"><col class="w-[157px]"><col class="w-[61px]"><col class="w-[37px]"><col class="w-[39px]"><col class="w-[49px]"><col class="w-[61px]"><col class="w-[61px]"><col class="w-[71px]"><col class="w-[20px]"></colgroup>
                <tr class="h-[18px]">
                  <th></th><th>筋号</th><th class="bg-linear-to-b! from-[#fcdca0]! to-[#f6c06a]! text-[#5a0a6a]">直径<small class="font-['DejaVu_Sans_Mono']">(mm)</small></th><th>级别</th><th>图号</th><th>图形</th><th>计算公式</th><th>公式描述</th><th>长度<small class="font-['DejaVu_Sans_Mono']">(mm)</small></th><th>根数</th><th>搭接</th><th>损耗<small class="font-['DejaVu_Sans_Mono']">(%)</small></th><th>单重<small class="font-['DejaVu_Sans_Mono']">(kg)</small></th><th>总重<small class="font-['DejaVu_Sans_Mono']">(kg)</small></th><th>钢筋归类</th><th class="text-left pl-[13px]!">搭接形式</th>
                </tr>
                <tr class="h-[61px] bg-[#ccffd4]">
                  <th class="bg-none! bg-[#ffd38c]! text-[#800080] font-['DejaVu_Sans_Mono']! text-[11px]">1*</th><td>横向钢筋<small class="font-['DejaVu_Sans_Mono']">.1</small></td><td class="bg-[#aeecd8] font-['DejaVu_Sans_Mono'] text-[10px]">10</td><td class="text-center pl-0!">Φ</td><td class="font-['DejaVu_Sans_Mono'] text-[10px]">0</td><td></td><td class="font-['DejaVu_Sans_Mono'] text-[10px]">400+2245</td><td>端头+净长</td><td class="font-['DejaVu_Sans_Mono'] text-[10px]">2645</td><td class="font-['DejaVu_Sans_Mono'] text-[10px]">20</td><td class="font-['DejaVu_Sans_Mono'] text-[10px]">0</td><td class="font-['DejaVu_Sans_Mono'] text-[10px]">0</td><td class="font-['DejaVu_Sans_Mono'] text-[10px]">1.632</td><td class="font-['DejaVu_Sans_Mono'] text-[10px]">32.639</td><td>直筋</td><td>绑扎</td>
                </tr>
                <tr class="h-[61px] bg-[#ccffd4]">
                  <th class="font-['DejaVu_Sans_Mono']! text-[11px]">2</th><td>横向钢筋<small class="font-['DejaVu_Sans_Mono']">.2</small></td><td class="font-['DejaVu_Sans_Mono'] text-[10px]">10</td><td class="text-center pl-0!">Φ</td><td class="font-['DejaVu_Sans_Mono'] text-[10px]">0</td><td></td><td class="font-['DejaVu_Sans_Mono'] text-[10px]">150+1120</td><td>端头+净长</td><td class="font-['DejaVu_Sans_Mono'] text-[10px]">1270</td><td class="font-['DejaVu_Sans_Mono'] text-[10px]">20</td><td class="font-['DejaVu_Sans_Mono'] text-[10px]">0</td><td class="font-['DejaVu_Sans_Mono'] text-[10px]">0</td><td class="font-['DejaVu_Sans_Mono'] text-[10px]">0.784</td><td class="font-['DejaVu_Sans_Mono'] text-[10px]">15.672</td><td>直筋</td><td>绑扎</td>
                </tr>
                <tr class="h-[61px] bg-[#ccffd4]">
                  <th class="font-['DejaVu_Sans_Mono']! text-[11px]">3</th><td>横向钢筋<small class="font-['DejaVu_Sans_Mono']">.3</small></td><td class="font-['DejaVu_Sans_Mono'] text-[10px]">10</td><td class="text-center pl-0!">Φ</td><td class="font-['DejaVu_Sans_Mono'] text-[10px]">0</td><td></td><td class="font-['DejaVu_Sans_Mono'] text-[10px]">400+550</td><td>端头+净长</td><td class="font-['DejaVu_Sans_Mono'] text-[10px]">950</td><td class="font-['DejaVu_Sans_Mono'] text-[10px]">20</td><td class="font-['DejaVu_Sans_Mono'] text-[10px]">0</td><td class="font-['DejaVu_Sans_Mono'] text-[10px]">0</td><td class="font-['DejaVu_Sans_Mono'] text-[10px]">0.586</td><td class="font-['DejaVu_Sans_Mono'] text-[10px]">11.723</td><td>直筋</td><td>绑扎</td>
                </tr>
                <tr class="h-[61px] bg-[#ccffd4] align-top">
                  <th class="font-['DejaVu_Sans_Mono']! text-[11px] font-bold! pt-[4px]">4</th><td class="pt-[4px]">水平纵筋<small class="font-['DejaVu_Sans_Mono']">.1</small></td><td class="pt-[4px] font-['DejaVu_Sans_Mono'] text-[10px]">8</td><td class="pt-[4px] text-center pl-0!">Φ</td><td class="pt-[4px] font-['DejaVu_Sans_Mono'] text-[10px]">1</td><td class="pt-[3px] text-center text-[#e00000] text-[11px] font-['Liberation_Sans']">3250</td><td class="pt-[4px] font-['DejaVu_Sans_Mono'] text-[10px]">3250</td><td class="pt-[4px]">净长</td><td class="pt-[4px] font-['DejaVu_Sans_Mono'] text-[10px]">3250</td><td class="pt-[4px] font-['DejaVu_Sans_Mono'] text-[10px]">22</td><td class="pt-[4px] font-['DejaVu_Sans_Mono'] text-[10px]">0</td><td class="pt-[4px] font-['DejaVu_Sans_Mono'] text-[10px]">0</td><td class="pt-[4px] font-['DejaVu_Sans_Mono'] text-[10px]">1.284</td><td class="pt-[4px] font-['DejaVu_Sans_Mono'] text-[10px]">28.243</td><td class="pt-[4px]">直筋</td><td class="pt-[4px]">绑扎</td>
                </tr>
              </table>
              <svg class="absolute left-0 top-0 w-[1154px]! h-[220px]!" viewBox="194 467 1154 220">
                <path d="M299.5 486V687" stroke="#000"/>
                <g fill="none" stroke="#000" stroke-width="2">
                  <path d="M496 543V512H538M531 512V501H540V512"/>
                  <path d="M581 550V589.5H460"/>
                  <path d="M509 614H519V665"/>
                </g>
                <circle cx="533" cy="510" r="3" fill="#000"/>
                <g font-size="11" fill="#111">
                  <text x="508" y="522">370</text><text x="544" y="522">170</text>
                  <text x="460" y="602">150</text><text x="520" y="607">805</text><text x="530" y="621">165</text>
                  <text transform="translate(510 535) rotate(-90)">400</text>
                  <text transform="translate(510 513) rotate(-90)">385</text>
                  <text transform="translate(532 510) rotate(-90)">320</text>
                  <text transform="translate(541 508) rotate(-90)">260</text>
                  <text transform="translate(594 571) rotate(-90)">315</text>
                  <text transform="translate(529 627) rotate(-90)">385</text>
                  <text transform="translate(529 652) rotate(-90)">400</text>
                </g>
              </svg>
            </div>
            <div class="flex flex-col flex-1 items-center justify-between bg-[#f0f0f0] pt-[3px] pb-[3px] text-[#444]">
              <svg class="w-[9px]! h-[6px]! my-[4px]" viewBox="0 0 9 6"><path d="M1 5l3.5-4L8 5" fill="none" stroke="#444" stroke-width="1.3"/></svg>
              <i class="w-full h-[51px] mb-auto bg-[#cdcdcd]"></i>
              <svg class="w-[9px]! h-[6px]! my-[2px]" viewBox="0 0 9 6"><path d="M1 1l3.5 4L8 1" fill="none" stroke="#444" stroke-width="1.3"/></svg>
            </div>
          </div>
          <div class="flex items-center h-[16px] bg-[#f0f0f0]">
            <span class="flex items-center justify-center w-[12px]"><svg class="w-[6px]! h-[9px]!" viewBox="0 0 6 9"><path d="M5 1L1 4.5 5 8" fill="none" stroke="#444" stroke-width="1.4"/></svg></span>
            <i class="w-[809px] h-full bg-[#cdcdcd]"></i>
            <span class="flex items-center justify-center w-[20px] ml-[312px]"><svg class="w-[6px]! h-[9px]!" viewBox="0 0 6 9"><path d="M1 1l4 3.5L1 8" fill="none" stroke="#888" stroke-width="1.4"/></svg></span>
          </div>
        </div>
      </div>
    </div>
  </div>

  <!-- status bar -->
  <div class="flex h-[20px] shrink-0 gap-[3px] bg-[#f0f0f0] font-['DejaVu_Sans_Mono','Noto_Sans_CJK_SC',monospace] whitespace-nowrap [&>span]:flex [&>span]:items-center [&>span]:h-full [&>span]:bg-[#fafafa] [&>span]:border [&>span]:border-[#d0d0d0] [&>span]:pl-[1px] [&>span]:shrink-0">
    <span class="w-[147px]"><small>X=53344 Y=3439</small></span>
    <span class="w-[77px]">层高<small>:2.8m</small></span>
    <span class="w-[97px]">底标高<small>:13.07m</small></span>
    <span class="w-[47px] pl-[2px]!"><small>1(1)</small></span>
    <span class="w-[912px]"></span>
    <span class="w-[70px] pl-[2px]!"><small>97.6 FPS</small></span>
  </div>

  <!-- taskbar -->
  <div class="flex h-[40px] shrink-0 items-center bg-[#04090c] text-white whitespace-nowrap [&>span]:flex [&>span]:items-center [&>span]:justify-center [&>span]:h-full [&>span]:shrink-0">
    <span class="w-[48px] bg-black"><svg class="w-4 h-4" viewBox="0 0 16 16"><path d="M0 2.3l6.5-1V7.5H0zM7.5 1.2L16 0v7.5H7.5zM0 8.5h6.5v6.3L0 13.8zM7.5 8.5H16V16l-8.5-1.2z" fill="#fff"/></svg></span>
    <span class="w-[344px] bg-[#343434] justify-start! text-[#9a9a9a] text-[13px]">
      <i class="ml-[9px] mr-[7px] w-[20px] h-[20px] rounded-full border-[3px] border-[#e8e8e8] shrink-0"></i>在这里输入你要搜索的内容
      <svg class="ml-auto mr-[13px] w-[12px] h-[20px]" viewBox="0 0 12 20"><g fill="none" stroke="#888" stroke-width="1.2"><rect x="3.5" y="1" width="5" height="11" rx="2.5"/><path d="M1 8c0 7 10 7 10 0M6 14v4M3 18h6"/></g></svg>
    </span>
    <span class="w-[48px]"><svg class="w-[20px] h-[16px]" viewBox="0 0 20 16"><path d="M5.5 1h9v14h-9zM2.5 3H.5v10h2M17.5 3h2v10h-2" fill="none" stroke="#fff"/></svg></span>
    <span class="w-[52px]"><svg class="w-[22px] h-[26px]" viewBox="0 0 22 26"><path d="M2 1h8l1 11H2c-2-4-2-8 0-11zM20 1h-8v11h8c2-4 2-8 0-11zM2 14h9v11H3c-3-4-3-8-1-11zM12 14h8c2 3 2 7-1 11h-7z" fill="#d8dcdf"/></svg></span>
    <span class="w-[52px] relative"><svg class="w-[20px] h-[24px]" viewBox="0 0 20 24"><path d="M16 6C9 1 2 7 3 14c1 7 10 8 12 3 1-4-3-7-6-5-2 2 0 5 2 4" fill="none" stroke="#b8bcc0" stroke-width="2"/></svg><svg class="absolute left-[22px] top-[5px] w-[14px] h-[17px]" viewBox="0 0 14 17"><path d="M7 0c3 0 4 3 4 7l3 5H0l3-5c0-4 1-7 4-7zM5 13h4l-2 3z" fill="#e8a318"/></svg></span>
    <span class="w-[50px]"><svg class="w-[22px] h-[26px]" viewBox="0 0 22 26"><path d="M11 2C4 2 1 8 1 14c0 8 9 11 17 8v-5c-5 3-11 2-11-2h14c1-8-3-13-10-13zM7 11c1-4 7-4 8 0z" fill="#0a78d7"/></svg></span>
    <span class="w-[48px]"><svg class="w-[24px] h-[28px]" viewBox="0 0 24 28"><path d="M2 8h20l-1 19H3z" fill="#fff"/><path d="M8 8c0-8 8-8 8 0" fill="none" stroke="#fff" stroke-width="1.5"/><path d="M6 12h5v5H6z" fill="#f25022"/><path d="M13 12h5v5h-5z" fill="#7fba00"/><path d="M6 18h5v5H6z" fill="#00a4ef"/><path d="M13 18h5v5h-5z" fill="#ffb900"/></svg></span>
    <span class="w-[50px]"><svg class="w-[24px] h-[24px]" viewBox="0 0 24 24"><path d="M1 1h9l2 3h11v19H1z" fill="#f2d06b"/><path d="M1 8h22v15H1z" fill="#f9e49a"/><path d="M7 15h10v8H7z" fill="#35a8e8"/></svg></span>
    <span class="w-[49px]"><svg class="w-[26px] h-[26px]" viewBox="0 0 26 26"><path d="M13 4C6 4 2 9 2 15c0 7 10 10 17 5v-4c-4 4-11 4-11-1h15c1-6-3-11-10-11zM8 11c1-4 9-4 10 0z" fill="#2a9fe8"/><path d="M3 22c-3-5 5-15 19-20-6 5-13 11-17 18z" fill="#f2b417"/></svg></span>
    <span class="w-[49px] relative"><svg class="w-[24px] h-[26px]" viewBox="0 0 24 26"><circle cx="12" cy="13" r="11" fill="#7cc242" stroke="#3a7a1a"/><circle cx="12" cy="13" r="7" fill="#e8f8d0"/><path d="M5 13h14M12 8l-3 3h6zM12 18l-3-3h6z" fill="#5a9a2a" stroke="#5a9a2a"/></svg><i class="absolute left-[4px] right-[5px] bottom-0 h-[2px] bg-[#76b9ed]"></i></span>
    <span class="w-[48px] bg-[#3a4347] relative"><svg class="w-[24px] h-[24px]"><use href="#logo"/></svg><i class="absolute left-0 right-0 bottom-0 h-[2px] bg-[#76b9ed]"></i></span>
    <span class="w-[147px]"></span>
    <span class="w-[63px] flex-col! text-[#e8951c] leading-[17px]"><span>83%</span><span>CPU使用</span></span>
    <span class="w-[18px] ml-[8px]"><svg class="w-[13px] h-[8px]" viewBox="0 0 13 8"><path d="M1 7l5.5-6L12 7" fill="none" stroke="#fff" stroke-width="1.2"/></svg></span>
    <span class="w-[30px]"><svg class="w-[16px] h-[14px]" viewBox="0 0 16 14"><rect x="3" y="5" width="12" height="8" fill="#fff"/><path d="M2 0v4M5 0v4M0 4h7v3H0z" stroke="#fff" fill="#fff"/></svg></span>
    <span class="w-[22px]"><svg class="w-[16px] h-[16px]" viewBox="0 0 16 16"><g fill="none" stroke="#ddd"><path d="M1 15C1 8 8 1 15 1"/><path d="M4 15c0-5 6-11 11-11" stroke-dasharray="2 1"/><path d="M7 15c0-3 4-8 8-8" stroke-dasharray="2 1"/></g><circle cx="12" cy="13" r="1.5" fill="#fff"/></svg></span>
    <span class="w-[22px]"><svg class="w-[16px] h-[16px]" viewBox="0 0 16 16"><path d="M1 5h3l4-4v14l-4-4H1z" fill="none" stroke="#fff"/><path d="M10 5c2 2 2 4 0 6M13 3c3 3 3 7 0 10" fill="none" stroke="#ccc"/></svg></span>
    <span class="w-[34px]"><svg class="w-[23px] h-[16px]" viewBox="0 0 23 16"><rect x=".5" y=".5" width="22" height="15" fill="none" stroke="#fff"/><path d="M3 4h17M3 7h17M5 11h13" stroke="#fff" stroke-dasharray="1 1"/></svg></span>
    <span class="w-[22px] text-[14px]">中</span>
    <span class="w-[34px]"><svg class="w-[16px] h-[18px]" viewBox="0 0 16 18"><path d="M2 2l13-2 1 16-14 2z" fill="#e8451f"/><path d="M11 5H6v3.5h4V13H5" fill="none" stroke="#fff" stroke-width="2"/></svg></span>
    <span class="w-[74px] flex-col! text-[13px] leading-[19px] text-[#eee]"><span>10:47</span><span>2017/11/14</span></span>
    <span class="w-[50px] relative"><svg class="w-[16px] h-[16px] -mt-[6px]" viewBox="0 0 16 16"><path d="M0 0h16v13H5l-3 3v-3H0z" fill="#fff"/><path d="M3 4h10M3 7h10M3 10h7" stroke="#333"/></svg><b class="absolute left-[20px] top-[16px] w-[20px] h-[20px] flex items-center justify-center rounded-full bg-[#333] border border-[#888] text-[12px]">20</b></span>
  </div>

  <!-- overlays -->
  <div class="absolute left-[490px] -top-[22px] w-[48px] h-[48px] rounded-full bg-[#37b35f] border-2 border-[#e8e8e8] shadow-[0_1px_3px_#555] flex items-end justify-center pb-[3px] text-white text-[11px] font-bold">72</div>
  <div class="absolute left-[664px] top-[33px] flex items-center w-[183px] h-[25px] bg-[#f0f4fa] border border-[#c8d4e4] [&>*]:shrink-0">
    <svg class="ml-px w-[24px] h-[24px] -mt-[2px]" viewBox="0 0 24 24"><rect x="1" y="2" width="22" height="20" rx="4" fill="#e8451f" transform="rotate(-8 12 12)"/><path d="M17 7H8v5h8v5H7" fill="none" stroke="#fff" stroke-width="3"/></svg>
    <span class="ml-[5px] w-[20px] text-[#1b7fd4] text-[14px] font-bold">中</span>
    <span class="w-[23px] text-[#1b7fd4] text-[14px] font-bold">°,</span>
    <svg class="w-[14px] h-[18px]" viewBox="0 0 14 18"><rect x="4" y="0" width="6" height="11" rx="3" fill="#1b7fd4"/><path d="M1 7c0 7 12 7 12 0M7 13v4M3 17h8" fill="none" stroke="#1b7fd4" stroke-width="1.5"/></svg>
    <svg class="ml-[9px] w-[17px] h-[14px]" viewBox="0 0 17 14"><rect width="17" height="14" rx="2" fill="#1b7fd4"/><path d="M2 4h13M2 7h13M4 10h9" stroke="#fff" stroke-dasharray="1.5 1"/></svg>
    <svg class="ml-[8px] w-[15px] h-[17px]" viewBox="0 0 15 17"><circle cx="6" cy="4" r="3.5" fill="#c0c8d2"/><path d="M0 15c0-7 12-7 12 0z" fill="#c0c8d2"/><rect x="8" y="9" width="7" height="7" fill="#fff" stroke="#a0a8b2"/></svg>
    <svg class="ml-[8px] w-[16px] h-[16px]" viewBox="0 0 16 16"><path d="M5 0L0 3l2 4 2-1v10h8V6l2 1 2-4-5-3c-1 2-5 2-6 0z" fill="#1b7fd4"/></svg>
    <svg class="ml-[4px] w-[16px] h-[16px]" viewBox="0 0 16 16"><path d="M1 13L8 6c-1-3 2-6 6-5l-3 3 2 2 3-3c0 4-3 7-6 6l-7 6z" fill="#1b7fd4"/></svg>
  </div>
</div>
</body>
</html>
